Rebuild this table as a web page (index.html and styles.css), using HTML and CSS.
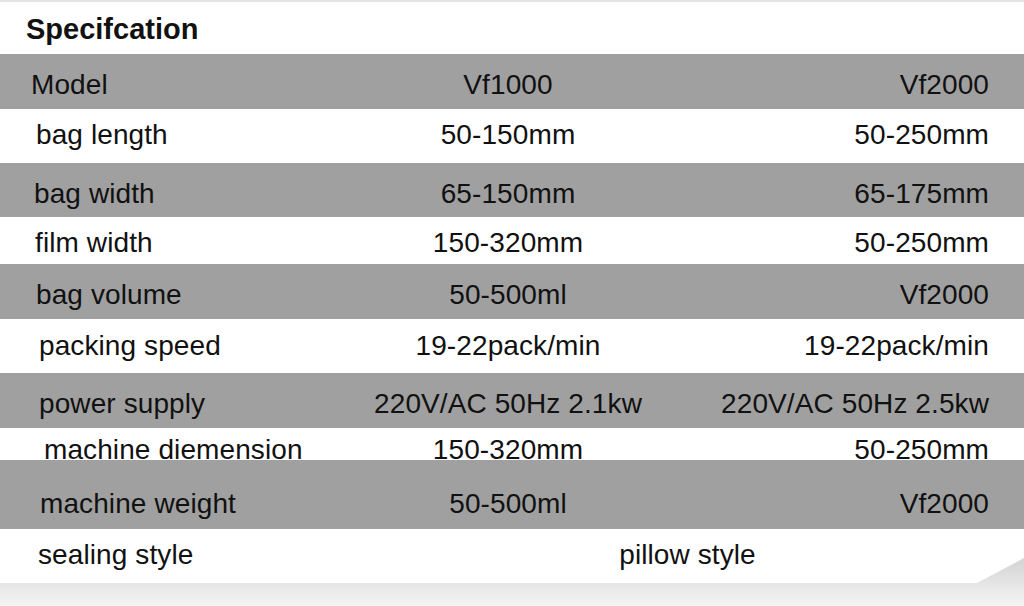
FILE: index.html
```html
<!DOCTYPE html>
<html>
<head>
<meta charset="utf-8">
<link rel="stylesheet" href="styles.css">
</head>
<body>
<div class="page">
  <div class="topband"></div>
  <div class="sheet">
    <div class="card">
      <div class="title">Specifcation</div>
      <div class="row gray h55"><span class="lab in31">Model</span><span class="mid">Vf1000</span><span class="val">Vf2000</span></div>
      <div class="row h54 up"><span class="lab in36">bag length</span><span class="mid">50-150mm</span><span class="val">50-250mm</span></div>
      <div class="row gray h54 dn"><span class="lab in34">bag width</span><span class="mid">65-150mm</span><span class="val">65-175mm</span></div>
      <div class="row h47"><span class="lab in35">film width</span><span class="mid">150-320mm</span><span class="val">50-250mm</span></div>
      <div class="row gray h55"><span class="lab in36">bag volume</span><span class="mid">50-500ml</span><span class="val">Vf2000</span></div>
      <div class="row h54 flat"><span class="lab in39">packing speed</span><span class="mid">19-22pack/min</span><span class="val">19-22pack/min</span></div>
      <div class="row gray h55"><span class="lab in39">power supply</span><span class="mid">220V/AC 50Hz 2.1kw</span><span class="val">220V/AC 50Hz 2.5kw</span></div>
      <div class="row h32"><span class="lab in44">machine diemension</span><span class="mid">150-320mm</span><span class="val">50-250mm</span></div>
      <div class="row gray h69"><span class="lab in40">machine weight</span><span class="mid">50-500ml</span><span class="val">Vf2000</span></div>
      <div class="row h54 up"><span class="lab in38">sealing style</span><span class="span">pillow style</span></div>
    </div>
  </div>
</div>
</body>
</html>
```

FILE: styles.css
```css
html, body {
  margin: 0;
  padding: 0;
  background: #ffffff;
}

body {
  font-family: "Liberation Sans", Arial, sans-serif;
  color: #111111;
  width: 1024px;
  height: 606px;
  overflow: hidden;
}

.page {
  width: 1024px;
  height: 606px;
  display: flex;
  flex-direction: column;
}

.topband {
  height: 2px;
  background: #e4e4e4;
  flex: none;
}

.sheet {
  flex: 1;
  background: linear-gradient(to bottom, #d6d6d6 0, #d6d6d6 560px, #f4f4f4 604px);
}

.card {
  background: #ffffff;
  height: 581px;
  clip-path: polygon(0 0, 100% 0, 100% 556px, 977px 100%, 0 100%);
}

.title {
  height: 52px;
  font-weight: bold;
  font-size: 29px;
  padding-left: 26px;
  display: flex;
  align-items: center;
  padding-top: 3px;
  box-sizing: border-box;
}

.row {
  display: grid;
  grid-template-columns: 340px 336px 1fr;
  padding-right: 35px;
  align-items: center;
  font-size: 28px;
  letter-spacing: 0.1px;
  padding-top: 4px;
  box-sizing: border-box;
}

.gray {
  background: #a0a0a0;
  padding-top: 6px;
}

.row.dn { padding-top: 7px; }
.row.up { padding-top: 0; padding-bottom: 2px; }
.row.flat { padding-top: 0; }

.h55 { height: 55px; }
.h54 { height: 54px; }
.h47 { height: 47px; }
.row.h32 { height: 32px; line-height: 32px; padding-top: 6px; align-items: start; }
.row.h69 { height: 69px; padding-top: 19px; }

.lab { white-space: nowrap; }
.in31 { padding-left: 31px; }
.in34 { padding-left: 34px; }
.in35 { padding-left: 35px; }
.in36 { padding-left: 36px; }
.in38 { padding-left: 38px; }
.in39 { padding-left: 39px; }
.in40 { padding-left: 40px; }
.in44 { padding-left: 44px; }

.mid {
  text-align: center;
  white-space: nowrap;
}

.val {
  text-align: right;
  white-space: nowrap;
}

.span {
  grid-column: 2 / 4;
  text-align: center;
  padding-left: 46px;
  white-space: nowrap;
}
```
